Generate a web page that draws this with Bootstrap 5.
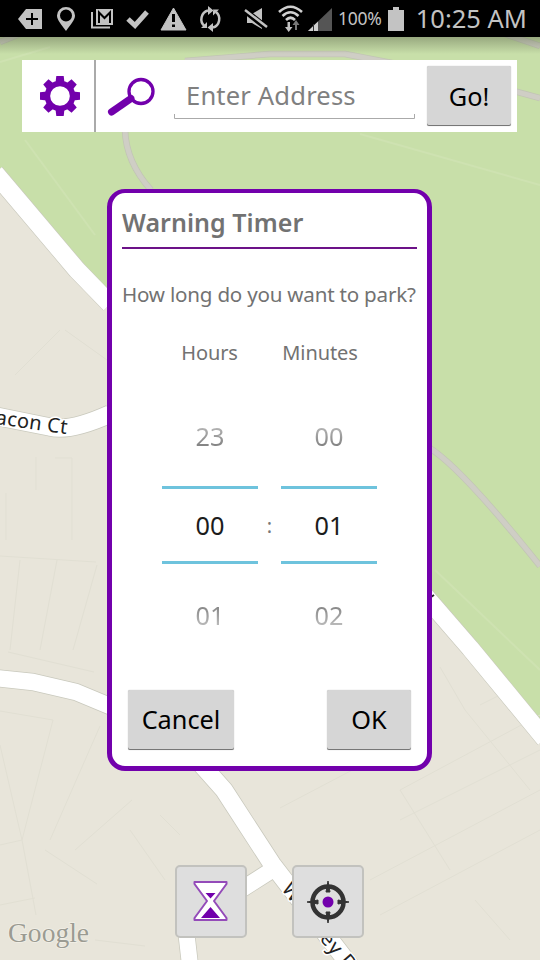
<!DOCTYPE html>
<html lang="en">
<head>
<meta charset="utf-8">
<meta name="viewport" content="width=device-width, initial-scale=1">
<title>Warning Timer</title>
<link href="https://cdn.jsdelivr.net/npm/bootstrap@5.3.0/dist/css/bootstrap.min.css" rel="stylesheet">
<style>
body{width:540px;height:960px;font-family:"Noto Sans",sans-serif;background:#e8e5da;color:#727272}
.screen{width:540px;height:960px}
.map-layer{z-index:0}
.map-layer text{font-family:"Noto Sans",sans-serif}
.front{z-index:1}
.status-bar{height:37px;color:#c3c3c3;padding:0 13px 0 17px}
.pct{font-size:17.5px;line-height:37px;letter-spacing:-.3px}
.clock{font-size:25.5px;line-height:37px;letter-spacing:0}
.search-bar{margin:23px 23px 0 22px;height:72px}
.tool-cell{width:72px}
.sep{width:2px;background:#aaa}
.tool-cell2{width:76px}
.address{width:241px;height:50px;margin:9px 0 0 2px;font-size:25.6px;line-height:54px;padding-left:12px;color:#808080;letter-spacing:.15px}
.address svg{left:0;bottom:-1px}
.btn-soft{--bs-btn-bg:#d6d6d6;--bs-btn-color:#000;--bs-btn-border-width:0;--bs-btn-border-radius:2px;height:60px;padding:0;font-size:25.3px;box-shadow:inset 0 -1px #777,0 0 1px #aaa}
.go{width:84px;margin:6px 6px 0 0;padding-top:2px}
.dialog{width:325px;height:582px;margin:57px 0 0 107px;border:5px solid #7200ac;border-top-width:4px;border-radius:18px;padding:0 10px}
.dialog h1{font-size:25px;font-weight:600;line-height:34px;padding-top:12px;height:56px;margin:0;border-bottom:2px solid #6c1288;letter-spacing:.05px}
.question{font-size:20.6px;line-height:28px;margin:31px -5px 0 0;letter-spacing:-.22px}
.wheels{margin:31px 0 0 40px}
.wheel{width:96px}
.wheel-label{font-size:20px;line-height:28px;letter-spacing:-.1px}
.minutes-label{margin-left:-18px}
.hours-label{margin-left:-1px}
.val{font-size:25.3px;line-height:34px}
.off-top{margin-top:52px;height:67px;background:linear-gradient(#b5b5b5 8px,#858585 26px);-webkit-background-clip:text;background-clip:text;color:transparent}
.off-bottom{height:68px;padding-top:34px;background:linear-gradient(#858585 42px,#bcbcbc 62px);-webkit-background-clip:text;background-clip:text;color:transparent}
.now{border-top:3px solid #6ec3dd;border-bottom:3px solid #6ec3dd;height:78px;padding-top:19px;color:#1c1c1c}
.colon{width:23px;font-size:20px;line-height:28px;padding-top:173px;color:#777}
.actions{margin:58px 6px 0 6px}
.cancel{width:106px}
.ok{width:84px}
.map-tools{margin:94px 0 0 175px;gap:45px}
.map-btn{width:72px;height:73px;background:#dedede;border:2px solid #c2c2be;border-radius:5px}
</style>
<script src="https://cdn.jsdelivr.net/npm/bootstrap@5.3.0/dist/js/bootstrap.bundle.min.js"></script>
</head>
<body>
<div class="screen position-relative overflow-hidden">
<svg class="map-layer position-absolute top-0 start-0" width="540" height="960" viewBox="0 0 540 960">
  <defs><linearGradient id="shade" x2="0" y2="1"><stop stop-color="#707c5c" stop-opacity=".55"/><stop offset="1" stop-color="#707c5c" stop-opacity="0"/></linearGradient></defs>
  <rect width="540" height="960" fill="#e8e5da"/>
  <path d="M0 0H540V733L470 648 432 606 107 302 77 270 0 178Z" fill="#c8dfa9"/>
  <g fill="none" stroke="#e1dfd3" stroke-width="1">
    <path d="M6 493V540M36 457V490M55 458H72V540M0 556L96 562M20 560L10 650M57 560L40 650M97 565L73 650M8 652L94 672M0 711L53 720 22 840 36 915M0 745L22 840 0 845M45 850L97 884M100 726L50 840M132 800L75 850M15 375L60 330M65 330L107 360M160 815L180 835M130 830L165 880M0 905L35 898M95 940L145 946"/>
    <path d="M440 667L465 710 530 790M480 705L510 690M400 790L540 715M400 820L540 750M280 808L400 745M400 790L450 870M370 880L540 790M380 915L540 830M475 900L510 940"/>
  </g>
  <g fill="none" stroke="#cee2b1" stroke-width="2"><path d="M360 134L540 185M25 140L95 235M435 570L540 670M0 62L50 47"/></g>
  <g fill="none" stroke-linejoin="round">
    <g stroke="#c2c5b5" stroke-width="6.500"><path d="M125 130Q126 162 151 190"/><path d="M428 447Q460 466 540 566"/><path d="M185 61L270 54 345 54 402 65 480 82 540 98"/><path d="M0 42L20 34M505 34L540 46"/></g>
    <g stroke="#cfcec5" stroke-width="5"><path d="M125 130Q126 162 151 190"/><path d="M428 447Q460 466 540 566"/><path d="M185 61L270 54 345 54 402 65 480 82 540 98"/><path d="M0 42L20 34M505 34L540 46"/></g>
    <g stroke="#c9c9bd" stroke-width="20">
      <path d="M-5 173L77 270 110 304M425 596L470 648 545 739" stroke-width="19"/>
      <path d="M-5 416L50 427Q70 432 110 414" stroke-width="19"/>
      <path d="M-5 678L33 682 76 692 112 707" stroke-width="18"/>
      <path d="M200 763L224 790 272 864 355 972" stroke-width="19"/>
      <path d="M272 870L228 898 186 930 190 965" stroke-width="17.500"/>
    </g>
    <g stroke="#fff">
      <path d="M-5 173L77 270 110 304M425 596L470 648 545 739" stroke-width="17.800"/>
      <path d="M-5 416L50 427Q70 432 110 414" stroke-width="17.500"/>
      <path d="M-5 678L33 682 76 692 112 707" stroke-width="16.500"/>
      <path d="M200 763L224 790 272 864 355 972" stroke-width="17.500"/>
      <path d="M272 870L228 898 186 930 190 965" stroke-width="16"/>
    </g>
  </g>
  <g fill="#222" font-size="20" stroke="#fff" stroke-width="3" paint-order="stroke">
    <text transform="translate(-5 424) rotate(8)" textLength="72">acon Ct</text>
    <text transform="translate(281 889) rotate(52)">W</text>
    <text transform="translate(319 939) rotate(49)" textLength="54">ey Dr</text>
  </g>
  <path d="M431 597L434 595" stroke="#222" stroke-width="2"/>
  <text x="8" y="942" font-size="27" textLength="81" lengthAdjust="spacingAndGlyphs" style="font-family:'Liberation Serif',serif" fill="#9b9b92" stroke="#f2f0e8" stroke-width="1.500" paint-order="stroke">Google</text>
  <rect y="37" width="540" height="17" fill="url(#shade)"/>
</svg>

<div class="front position-relative">
<header class="status-bar bg-black d-flex align-items-center">
  <svg class="flex-shrink-0" width="321" height="37" viewBox="17 0 321 37" fill="#c3c3c3">
    <path d="M18 19L26 9H42V29H26Z"/><path d="M32 13V25M26 19H38" stroke="#000" stroke-width="2"/>
    <path fill-rule="evenodd" d="M66 31C61 24 57 20 57 15.500A9 8.500 0 0 1 75 15.500C75 20 71 24 66 31ZM66 9.500A6 6 0 1 0 66 21.500 6 6 0 1 0 66 9.500Z"/>
    <path d="M92 12V27.500H110" fill="none" stroke="#c3c3c3" stroke-width="2"/>
    <path d="M96 9H113V25H96Z"/><path d="M99 23V12.500L104.500 18 110 12.500V23" fill="none" stroke="#000" stroke-width="2"/>
    <path d="M128 19L135 25.500 147 12" fill="none" stroke="#c3c3c3" stroke-width="5"/>
    <path d="M173.500 8L186 30H161Z" stroke="#c3c3c3" stroke-linejoin="round"/><path d="M173.500 14V22M173.500 24.500V27" stroke="#000" stroke-width="3"/>
    <g fill="none" stroke="#c3c3c3" stroke-width="2.500"><path d="M204.500 26A9 9 0 0 1 208 10.500M216 12A9 9 0 0 1 213 27.500"/></g>
    <path d="M208 6L213.500 10.500 208 15ZM213 23L207.500 27.500 213 32ZM201 28L207 28 207 22ZM213 9.500V15.500L219 9.500Z"/>
    <path d="M247 14H252L262 8V29L252 23H247Z"/><path d="M244 10L267 28" stroke="#000" stroke-width="6"/><path d="M245 10L267 27" stroke="#c3c3c3" stroke-width="2.500"/>
    <g fill="none" stroke="#d0d0d0" stroke-width="2.600"><path d="M279 12Q290.500 1.500 302 12M282.500 16Q290.500 8.500 298.500 16M286 20Q290.500 15.500 295 20"/></g>
    <path d="M287.500 22H290V27H292.500L288.700 32 285 27H287.500Z"/><path d="M296 20L299.500 25H297V30H295V25H292.500Z" fill="#777"/>
    <path d="M332 8V31H308Z" fill="#555"/><path d="M318 21.500V31H308Z" fill="#d0d0d0"/><path d="M313.500 24V31" stroke="#333"/>
  </svg>
  <span class="pct text-nowrap">100%</span>
  <svg class="ms-auto flex-shrink-0" width="16" height="26" viewBox="0 0 16 26" fill="#c3c3c3"><path d="M5 1H11V4H16V25H0V4H5Z"/></svg>
  <span class="clock text-nowrap ms-2 ps-1">10:25 AM</span>
</header>

<section class="search-bar bg-white d-flex">
  <div class="tool-cell d-flex align-items-center justify-content-center">
    <svg width="44" height="44" viewBox="-22 -22 44 44">
      <g transform="translate(2 0)"><circle r="12.600" fill="none" stroke="#7200ac" stroke-width="5.500"/>
      <g fill="#7200ac"><path id="tooth" d="M-4.500 -13L-3.700 -20H3.700L4.500 -13Z"/><use href="#tooth" transform="rotate(45)"/><use href="#tooth" transform="rotate(90)"/><use href="#tooth" transform="rotate(135)"/><use href="#tooth" transform="rotate(180)"/><use href="#tooth" transform="rotate(225)"/><use href="#tooth" transform="rotate(270)"/><use href="#tooth" transform="rotate(315)"/></g></g>
    </svg>
  </div>
  <div class="sep"></div>
  <div class="tool-cell2 d-flex align-items-center">
    <svg width="76" height="72" viewBox="96 60 76 72" fill="none" stroke="#7200ac"><circle cx="141" cy="91.500" r="12" stroke-width="3.300"/><path d="M131 98.500L111.500 112" stroke-width="7" stroke-linecap="round"/></svg>
  </div>
  <div class="address position-relative">Enter Address
    <svg class="position-absolute" width="241" height="6" viewBox="0 0 241 6"><path d="M.5 0V4.500H240.500V0" fill="none" stroke="#aaa"/></svg>
  </div>
  <button class="btn btn-soft go ms-auto">Go!</button>
</section>

<main class="dialog bg-white">
  <h1>Warning Timer</h1>
  <p class="question text-nowrap mb-0">How long do you want to park?</p>
  <div class="wheels d-flex text-center">
    <div class="wheel">
      <div class="wheel-label hours-label">Hours</div>
      <div class="val off-top">23</div>
      <div class="val now">00</div>
      <div class="val off-bottom">01</div>
    </div>
    <div class="colon">:</div>
    <div class="wheel">
      <div class="wheel-label minutes-label text-nowrap">Minutes</div>
      <div class="val off-top">00</div>
      <div class="val now">01</div>
      <div class="val off-bottom">02</div>
    </div>
  </div>
  <div class="actions d-flex justify-content-between">
    <button class="btn btn-soft cancel">Cancel</button>
    <button class="btn btn-soft ok">OK</button>
  </div>
</main>

<nav class="map-tools d-flex" aria-label="Map tools">
  <div class="map-btn d-flex align-items-center justify-content-center">
    <svg width="38" height="44" viewBox="0 1 38 44"><path d="M2.500 3H34.500V5L22 22 34.500 39V41H2.500V39L15 22 2.500 5Z" fill="#fff" stroke="#944bb9" stroke-width="2" stroke-linejoin="round"/><path d="M13.500 14H23.500L18.500 19.500ZM18.500 28L28 39H9Z" fill="#7200ac"/></svg>
  </div>
  <div class="map-btn d-flex align-items-center justify-content-center">
    <svg width="44" height="44" viewBox="-22 -22 44 44"><circle r="15.500" fill="none" stroke="#333" stroke-width="4.500"/><path d="M0 -21L2 -10H-2ZM0 21L2 10H-2ZM-21 0L-10 -2V2ZM21 0L10 -2V2Z" fill="#333" stroke="#333"/><circle r="5.500" fill="#7200ac"/></svg>
  </div>
</nav>
</div>
</div>
</body>
</html>
